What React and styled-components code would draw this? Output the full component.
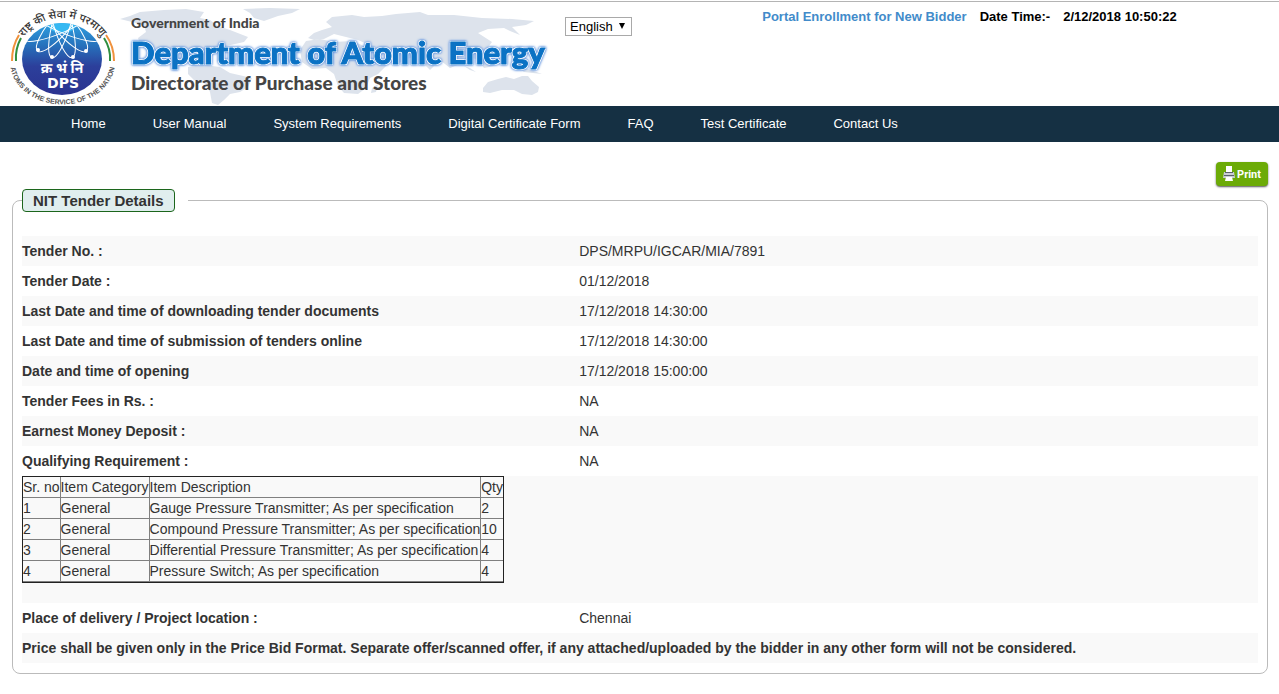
import React from "react";
import styled, { createGlobalStyle } from "styled-components";

const navItems = [
  "Home",
  "User Manual",
  "System Requirements",
  "Digital Certificate Form",
  "FAQ",
  "Test Certificate",
  "Contact Us",
];

const details = [
  ["Tender No. :", "DPS/MRPU/IGCAR/MIA/7891"],
  ["Tender Date :", "01/12/2018"],
  ["Last Date and time of downloading tender documents", "17/12/2018 14:30:00"],
  ["Last Date and time of submission of tenders online", "17/12/2018 14:30:00"],
  ["Date and time of opening", "17/12/2018 15:00:00"],
  ["Tender Fees in Rs. :", "NA"],
  ["Earnest Money Deposit :", "NA"],
  ["Qualifying Requirement :", "NA"],
];

const items = [
  ["1", "General", "Gauge Pressure Transmitter; As per specification", "2"],
  ["2", "General", "Compound Pressure Transmitter; As per specification", "10"],
  ["3", "General", "Differential Pressure Transmitter; As per specification", "4"],
  ["4", "General", "Pressure Switch; As per specification", "4"],
];

const Emblem = () => (
  <svg width="110" height="98" viewBox="0 0 110 98" role="img" aria-label="DPS">
    <defs>
      <linearGradient id="globe" x1="0" y1="0" x2="0" y2="1">
        <stop offset="0" stopColor="#2f9fe0" />
        <stop offset="0.3" stopColor="#2673bd" />
        <stop offset="0.6" stopColor="#2c3f9b" />
        <stop offset="1" stopColor="#2b3390" />
      </linearGradient>
      <clipPath id="globeClip">
        <ellipse cx="55" cy="51" rx="40" ry="36" />
      </clipPath>
      <path id="arcTop" d="M10 45 A46 41 0 0 1 101 45" />
      <path id="arcBottom" d="M3 54 A52 42 0 0 0 108 54" />
    </defs>
    <ellipse cx="55" cy="51" rx="40" ry="36" fill="url(#globe)" />
    <g clipPath="url(#globeClip)">
      <ellipse cx="55" cy="18" rx="13" ry="7" fill="#35b8f2" />
      <g fill="none" stroke="#fff" strokeWidth="1">
        <ellipse cx="55" cy="14" rx="9" ry="37" transform="rotate(16 55 14)" />
        <ellipse cx="55" cy="14" rx="9" ry="37" transform="rotate(-16 55 14)" />
        <ellipse cx="55" cy="14" rx="10" ry="38" transform="rotate(40 55 14)" />
        <ellipse cx="55" cy="14" rx="10" ry="38" transform="rotate(-40 55 14)" />
        <ellipse cx="55" cy="14" rx="10" ry="42" transform="rotate(66 55 14)" />
        <ellipse cx="55" cy="14" rx="10" ry="42" transform="rotate(-66 55 14)" />
      </g>
      <g fill="#fff">
        <circle cx="31" cy="42" r="2" />
        <circle cx="45" cy="49" r="2" />
        <circle cx="66" cy="49" r="2" />
        <circle cx="79" cy="43" r="2" />
      </g>
    </g>
    <g fill="none" strokeWidth="2">
      <path d="M5 53Q5 38 12 27" stroke="#f0913c" />
      <path d="M9 53Q8 41 14 30" stroke="#2f8f3f" />
      <path d="M107 53Q107 38 99 27" stroke="#f0913c" />
      <path d="M103 53Q104 41 97 30" stroke="#2f8f3f" />
    </g>
    <g fontFamily="Noto Sans Devanagari, Noto Sans, sans-serif">
      <text fontSize="11" fontWeight="500" fill="#333">
        <textPath href="#arcTop" startOffset="50%" textAnchor="middle">
          राष्ट्र की सेवा में परमाणु
        </textPath>
      </text>
      <text
        x="55"
        y="65"
        fontSize="14"
        fontWeight="bold"
        fill="#fff"
        textAnchor="middle"
      >
        क्र भं नि
      </text>
    </g>
    <text
      x="56"
      y="80"
      fontSize="14"
      fontWeight="bold"
      fontFamily="DejaVu Sans, sans-serif"
      fill="#fff"
      textAnchor="middle"
    >
      DPS
    </text>
    <text
      fontSize="7"
      fontWeight="bold"
      fontFamily="Liberation Sans, Arial, sans-serif"
      fill="#555"
    >
      <textPath href="#arcBottom" startOffset="50%" textAnchor="middle">
        ATOMS IN THE SERVICE OF THE NATION
      </textPath>
    </text>
  </svg>
);

const WorldMap = () => (
  <MapSvg viewBox="0 0 425 98" fill="#dde3ec" aria-hidden="true">
    <path d="M0 11L10 8L20 4L44 2L66 1L84 4L80 10L90 12L98 18L110 22L128 29L124 34L106 38L92 42L82 48L76 54L80 58L72 58L62 52L46 46L36 40L20 36L18 30L26 24L24 17L12 14Z" />
    <path d="M123 1L150 0L180 1L172 5L158 8L144 13L134 10L130 5Z" />
    <path d="M68 59L84 57L100 59L110 65L132 70L128 79L120 84L110 86L104 92L98 97L92 95L90 84L86 76L74 72L68 66Z" />
    <path d="M180 42L186 33L200 31L214 34L232 33L244 38L254 42L258 52L268 56L258 66L250 70L246 80L238 86L224 85L218 78L214 66L206 60L192 61L182 54Z" />
    <path d="M188 30L194 25L202 22L212 19L206 14L212 9L232 7L244 9L262 8L276 6L300 4L308 7L334 7L362 10L392 11L414 13L406 17L392 19L400 27L390 23L384 20L368 21L358 25L372 34L366 42L360 52L352 50L348 58L340 56L330 60L320 52L310 62L302 54L290 50L276 56L264 50L256 40L238 32L226 29L214 26L204 31L194 32Z" />
    <path d="M344 58L350 60L356 64L350 62ZM360 54L370 52L374 58L364 60ZM396 58L408 61L422 66L404 64Z" />
    <path d="M363 80L368 74L378 71L386 69L394 71L402 68L408 68L412 73L419 79L418 84L412 87L402 86L394 82L382 82L370 85L363 84Z" />
    <path d="M252 80L258 76L256 84L251 85Z" />
  </MapSvg>
);

const PrinterIcon = () => (
  <svg width="12" height="16" viewBox="0 0 12 16" aria-hidden="true">
    <rect x="3" y="0" width="6" height="6" fill="#fff" />
    <path d="M1 6H11L12 12H0Z" fill="#c9cdd3" />
    <rect x="2" y="6" width="8" height="1" fill="#59626a" />
    <rect x="1" y="9" width="10" height="1" fill="#59626a" />
    <path d="M3 11H9L10 15H2Z" fill="#fff" />
  </svg>
);

const App = () => {
  return (
    <>
      <GlobalStyle />
      <Header>
        <Emblem />
        <Brand>
          <WorldMap />
          <p>Government of India</p>
          <h1>Department of Atomic Energy</h1>
          <h2>Directorate of Purchase and Stores</h2>
        </Brand>
        <Language>
          <select aria-label="Language" defaultValue="English">
            <option>English</option>
          </select>
          <svg width="6" height="6" viewBox="0 0 6 6" aria-hidden="true">
            <path d="M0 0H6L3 6Z" fill="#000" />
          </svg>
        </Language>
        <Account>
          <a href="#enroll">Portal Enrollment for New Bidder</a>
          <span>Date Time:-</span>
          <time>2/12/2018 10:50:22</time>
        </Account>
      </Header>

      <Nav>
        {navItems.map((item) => (
          <a href="#nav" key={item}>
            {item}
          </a>
        ))}
      </Nav>

      <Main>
        <PrintButton type="button">
          <PrinterIcon />
          Print
        </PrintButton>
        <Tender>
          <legend>
            <span>NIT Tender Details</span>
          </legend>
          {details.map(([label, value]) => (
            <Row key={label}>
              <Label>{label}</Label>
              <span>{value}</span>
            </Row>
          ))}
          <ItemsRow>
            <Items>
              <thead>
                <tr>
                  <th>Sr. no</th>
                  <th>Item Category</th>
                  <th>Item Description</th>
                  <th>Qty</th>
                </tr>
              </thead>
              <tbody>
                {items.map((item) => (
                  <tr key={item[0]}>
                    {item.map((cell, i) => (
                      <td key={i}>{cell}</td>
                    ))}
                  </tr>
                ))}
              </tbody>
            </Items>
          </ItemsRow>
          <Row>
            <Label>Place of delivery / Project location :</Label>
            <span>Chennai</span>
          </Row>
          <Row>
            <strong>
              Price shall be given only in the Price Bid Format. Separate
              offer/scanned offer, if any attached/uploaded by the bidder in any
              other form will not be considered.
            </strong>
          </Row>
        </Tender>
      </Main>
    </>
  );
};

const GlobalStyle = createGlobalStyle`
  * {
    box-sizing: border-box;
  }
  body {
    margin: 0;
    padding-top: 1px;
    background: #fff;
    color: #333;
    font-family: "Liberation Sans", Arial, sans-serif;
    font-size: 14px;
    line-height: 20px;
  }
`;

const Header = styled.header`
  display: flex;
  align-items: flex-start;
  height: 105px;
  padding: 6px 8% 0 7px;
  border-top: 1px solid #b4b4b4;
`;

const Brand = styled.div`
  position: relative;
  width: 425px;
  height: 98px;
  padding: 5px 0 0 14px;
  font-family: Lato, sans-serif;
  white-space: nowrap;
  p,
  h1,
  h2 {
    position: relative;
    margin: 0;
    color: #444;
    font-weight: 900;
  }
  p {
    font-size: 14px;
    line-height: 20px;
  }
  h1 {
    color: #0b72c4;
    font-size: 31px;
    line-height: 38px;
    -webkit-text-stroke: 1px #0b72c4;
    text-shadow: 1px 1px 0 #fff, -1px -1px 0 #fff, 1px -1px 0 #fff,
      -1px 1px 0 #fff;
    filter: drop-shadow(0 0 1px #5b8fdd) drop-shadow(0 0 1px #7fa8e4);
  }
  h2 {
    font-size: 19px;
    line-height: 24px;
  }
`;

const MapSvg = styled.svg`
  position: absolute;
  top: 0;
  left: 3px;
  width: 100%;
  height: 100%;
`;

const Language = styled.div`
  position: relative;
  margin: 9px 0 0 23px;
  select {
    appearance: none;
    display: block;
    width: 67px;
    height: 19px;
    padding: 0 0 0 4px;
    border: 1px solid #a9a9a9;
    border-radius: 0;
    background: #fff;
    color: #000;
    font: 13px "Liberation Sans", Arial, sans-serif;
  }
  svg {
    position: absolute;
    top: 6px;
    right: 7px;
    pointer-events: none;
  }
`;

const Account = styled.div`
  display: flex;
  gap: 13px;
  margin-left: auto;
  color: #000;
  font-size: 13px;
  font-weight: bold;
  line-height: 18px;
  white-space: nowrap;
  a {
    color: #428bca;
    text-decoration: none;
  }
`;

const Nav = styled.nav`
  display: flex;
  gap: 47px;
  height: 36px;
  padding: 0 71px;
  background: #153043;
  a {
    color: #fff;
    font-size: 13px;
    line-height: 35px;
    text-decoration: none;
    white-space: nowrap;
  }
`;

const Main = styled.main`
  display: flex;
  flex-direction: column;
  padding: 20px 11px 20px 12px;
`;

const PrintButton = styled.button`
  display: flex;
  align-items: center;
  align-self: flex-end;
  gap: 2px;
  height: 24px;
  padding: 0 7px;
  border: 0;
  border-radius: 4px;
  background: #6cab07;
  box-shadow: 0 1px 2px #555;
  color: #fff;
  font: bold 11px Roboto, sans-serif;
`;

const Tender = styled.fieldset`
  min-width: 0;
  margin: 3px 0 0;
  padding: 24px 9px 10px;
  border: 1px solid #bbb;
  border-radius: 8px;
  legend {
    padding: 0 13px 0 0;
  }
  legend span {
    display: block;
    padding: 0 10px;
    border: 1px solid #1c661c;
    border-radius: 4px;
    background: #e0eeee;
    font-size: 15px;
    font-weight: bold;
    line-height: 21px;
  }
`;

const Row = styled.div`
  display: flex;
  gap: 1px;
  padding: 5px 0;
  &:nth-of-type(odd) {
    background: #f9f9f9;
  }
`;

const Label = styled.span`
  flex: 0 0 45%;
  font-weight: bold;
`;

const ItemsRow = styled.div`
  padding-bottom: 20px;
  background: #f9f9f9;
`;

const Items = styled.table`
  border: 1px solid #222;
  border-spacing: 0;
  th,
  td {
    padding: 0;
    border-right: 1px solid #808080;
    border-bottom: 1px solid #808080;
    font-weight: normal;
    text-align: left;
  }
  th:last-child,
  td:last-child {
    border-right: 0;
  }
`;

export default App;
